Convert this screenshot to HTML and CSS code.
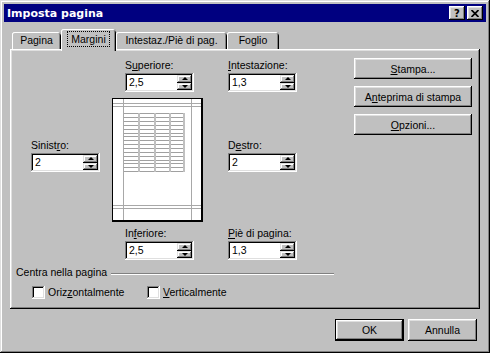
FILE: index.html
```html
<!DOCTYPE html>
<html lang="it">

<head>
    <meta charset="UTF-8">
    <meta name="viewport" content="width=device-width, initial-scale=1.0">
    <title>Imposta pagina</title>
    <link rel="stylesheet" href="styles.css">
</head>

<body>
    <div class="window">
        <div class="titlebar">
            <span class="title">Imposta pagina</span>
            <div class="tb-btns">
                <div class="tb-btn help">?</div>
                <div class="tb-btn">
                    <svg width="8" height="7" viewBox="0 0 8 7"><path d="M0.5 0L7.5 7M7.5 0L0.5 7" stroke="#000" stroke-width="1.7"/></svg>
                </div>
            </div>
        </div>
        <div class="body">
            <div class="tabs">
                <div class="tab t-pagina">Pagina</div>
                <div class="tab active t-margini"><span class="focus">Margini</span></div>
                <div class="tab t-intestaz">Intestaz./Piè di pag.</div>
                <div class="tab t-foglio">Foglio</div>
            </div>
            <div class="panel">
                <div class="left">
                    <div class="margins">
                        <div class="field f-sup">
                            <label>S<u>u</u>periore:</label>
                            <div class="spin"><span class="val">2,5</span><span class="arrows"><i class="up"></i><i class="down"></i></span></div>
                        </div>
                        <div class="field f-int">
                            <label><u>I</u>ntestazione:</label>
                            <div class="spin"><span class="val">1,3</span><span class="arrows"><i class="up"></i><i class="down"></i></span></div>
                        </div>
                        <div class="field f-sin">
                            <label>Sinist<u>r</u>o:</label>
                            <div class="spin"><span class="val">2</span><span class="arrows"><i class="up"></i><i class="down"></i></span></div>
                        </div>
                        <div class="preview">
                            <svg width="91" height="124" viewBox="0 0 91 124">
                                <rect x="0" y="0" width="91" height="124" fill="#000"/>
                                <rect x="1" y="1" width="88" height="121" fill="#fff"/>
                                <!-- righe della tabella -->
                                <path d="M11 15.5H72M11 19.5H72M11 23.5H72M11 27.5H72M11 31.5H72M11 35.5H72M11 38.5H72M11 42.5H72M11 46.5H72M11 50.5H72M11 54.5H72M11 58.5H72M11 62.5H72M11 65.5H72M11 69.5H72M11 73.5H72" stroke="#a0a0a0" stroke-width="1"/>
                                <path d="M27 15V74M43 15V74M58 15V74M72 15V74" stroke="#c0c0c0" stroke-width="2"/>
                                <!-- margini -->
                                <path d="M11.5 1V122M79.5 1V122M1 5.5H89M1 8.5H89M1 107.5H89M1 110.5H89" stroke="#a8a8a8" stroke-width="1"/>
                            </svg>
                        </div>
                        <div class="field f-des">
                            <label>D<u>e</u>stro:</label>
                            <div class="spin"><span class="val">2</span><span class="arrows"><i class="up"></i><i class="down"></i></span></div>
                        </div>
                        <div class="field f-inf">
                            <label>In<u>f</u>eriore:</label>
                            <div class="spin"><span class="val">2,5</span><span class="arrows"><i class="up"></i><i class="down"></i></span></div>
                        </div>
                        <div class="field f-pie">
                            <label><u>P</u>iè di pagina:</label>
                            <div class="spin"><span class="val">1,3</span><span class="arrows"><i class="up"></i><i class="down"></i></span></div>
                        </div>
                    </div>
                    <div class="group">
                        <div class="group-head"><span>Centra nella pagina</span><div class="line"></div></div>
                        <div class="checks">
                            <div class="check c-oriz"><span class="box"></span><span>Oriz<u>z</u>ontalmente</span></div>
                            <div class="check"><span class="box"></span><span><u>V</u>erticalmente</span></div>
                        </div>
                    </div>
                </div>
                <div class="side">
                    <div class="btn"><span><u>S</u>tampa...</span></div>
                    <div class="btn"><span>A<u>n</u>teprima di stampa</span></div>
                    <div class="btn"><span><u>O</u>pzioni...</span></div>
                </div>
            </div>
            <div class="footer">
                <div class="btn default">OK</div>
                <div class="btn">Annulla</div>
            </div>
        </div>
    </div>
</body>

</html>
```

FILE: styles.css
```css
* {
    margin: 0;
    padding: 0;
    box-sizing: border-box;
}

html,
body {
    width: 100%;
    height: 100%;
    background-color: #c0c0c0;
}

body {
    font-family: "Liberation Sans", Arial, sans-serif;
    font-size: 10.5px;
    color: #000;
}

u {
    text-decoration: underline;
    text-underline-offset: 1px;
}

.window {
    width: 490px;
    height: 353px;
    padding: 4px;
    background-color: #c0c0c0;
    display: flex;
    flex-direction: column;
    box-shadow: inset -1px -1px #000, inset 1px 1px #dfdfdf, inset -2px -2px #808080, inset 2px 2px #fff;
}

.titlebar {
    height: 18px;
    background-color: #000080;
    color: #fff;
    display: flex;
    align-items: center;
    justify-content: space-between;
    padding: 0 3px 0 3px;
}

.title {
    font-family: "DejaVu Sans", sans-serif;
    font-weight: bold;
    font-size: 11px;
}

.tb-btns {
    display: flex;
    gap: 2px;
}

.tb-btn {
    width: 16px;
    height: 14px;
    background-color: #c0c0c0;
    color: #000;
    display: flex;
    align-items: center;
    justify-content: center;
    box-shadow: inset -1px -1px #000, inset 1px 1px #fff, inset -2px -2px #808080, inset 2px 2px #dfdfdf;
}

.help {
    font-family: "DejaVu Sans", sans-serif;
    font-weight: bold;
    font-size: 10px;
}

.body {
    flex: 1;
    display: flex;
    flex-direction: column;
    padding: 0 6px;
}

/* linguette */
.tabs {
    height: 20px;
    margin-top: 7px;
    display: flex;
    align-items: flex-end;
    padding-left: 2px;
    z-index: 1;
}

.tab {
    height: 17px;
    padding-top: 2px;
    text-align: center;
    background-color: #c0c0c0;
    border-radius: 3px 3px 0 0;
    box-shadow: inset 1px 0 #fff, inset 0 1px #fff, inset -1px 0 #000, inset -2px 0 #808080;
}

.tab.active {
    height: 22px;
    margin-bottom: -2px;
    padding-top: 3px;
}

.t-pagina { width: 49px; }
.t-margini { width: 55px; }
.t-intestaz { width: 111px; }
.t-foglio { width: 52px; }

.focus {
    display: inline-block;
    outline: 1px dotted #000;
    padding: 0 3px;
    line-height: 14px;
}

/* pannello */
.panel {
    height: 260px;
    display: flex;
    box-shadow: inset -1px -1px #000, inset 1px 1px #fff, inset -2px -2px #808080, inset 2px 2px #dfdfdf;
}

.left {
    width: 324px;
    padding: 10px 0 0 6px;
}

.margins {
    margin-left: 15px;
    display: grid;
    grid-template-columns: 81px 116px 70px;
    grid-template-rows: 33px 124px 33px;
    row-gap: 6px;
}

.field label {
    display: block;
    height: 13px;
    line-height: 13px;
    margin-bottom: 1px;
}

.f-sup { grid-column: 2; grid-row: 1; margin-left: 13px; }
.f-int { grid-column: 3; grid-row: 1; }
.f-sin { grid-column: 1; grid-row: 2; margin-top: 41px; }
.preview { grid-column: 2; grid-row: 2; }
.preview svg { display: block; }
.f-des { grid-column: 3; grid-row: 2; margin-top: 41px; }
.f-inf { grid-column: 2; grid-row: 3; margin-left: 13px; margin-top: -1px; }
.f-pie { grid-column: 3; grid-row: 3; margin-top: -1px; }

.spin {
    width: 69px;
    height: 19px;
    padding: 2px;
    background-color: #fff;
    display: flex;
    box-shadow: inset -1px -1px #fff, inset 1px 1px #808080, inset -2px -2px #dfdfdf, inset 2px 2px #000;
}

.val {
    flex: 1;
    padding-left: 2px;
    line-height: 15px;
}

.arrows {
    width: 15px;
    display: flex;
    flex-direction: column;
}

.arrows i {
    flex: 1;
    background-color: #c0c0c0;
    display: flex;
    align-items: center;
    justify-content: center;
    box-shadow: inset -1px -1px #000, inset 1px 1px #dfdfdf, inset -2px -2px #808080, inset 2px 2px #fff;
}

.arrows i::after {
    content: "";
    border-left: 3px solid transparent;
    border-right: 3px solid transparent;
}

.arrows .up::after {
    border-bottom: 3px solid #000;
}

.arrows .down::after {
    border-top: 3px solid #000;
}

/* centra nella pagina */
.group {
    margin-top: 5px;
}

.group-head {
    display: flex;
    align-items: center;
    gap: 4px;
    height: 13px;
    line-height: 13px;
}

.group-head .line {
    flex: 1;
    height: 2px;
    margin-top: 2px;
    border-top: 1px solid #808080;
    border-bottom: 1px solid #fff;
}

.checks {
    display: flex;
    padding-left: 16px;
    margin-top: 7px;
}

.check {
    display: flex;
    align-items: center;
    gap: 3px;
    line-height: 13px;
}

.c-oriz {
    width: 115px;
}

.box {
    width: 13px;
    height: 13px;
    background-color: #fff;
    box-shadow: inset -1px -1px #fff, inset 1px 1px #808080, inset -2px -2px #dfdfdf, inset 2px 2px #000;
}

/* pulsanti */
.side {
    margin-left: auto;
    padding: 9px 8px 0 0;
    display: flex;
    flex-direction: column;
    gap: 7px;
}

.btn {
    height: 21px;
    width: 118px;
    display: flex;
    align-items: center;
    justify-content: center;
    background-color: #c0c0c0;
    box-shadow: inset -1px -1px #000, inset 1px 1px #fff, inset -2px -2px #808080, inset 2px 2px #dfdfdf;
}

.footer {
    margin-top: 10px;
    display: flex;
    justify-content: flex-end;
    gap: 4px;
    padding-right: 3px;
}

.footer .btn {
    width: 69px;
    height: 22px;
}

.footer .btn.default {
    border: 1px solid #000;
    box-shadow: inset -1px -1px #000, inset 1px 1px #fff, inset -2px -2px #808080, inset 2px 2px #dfdfdf;
}
```
